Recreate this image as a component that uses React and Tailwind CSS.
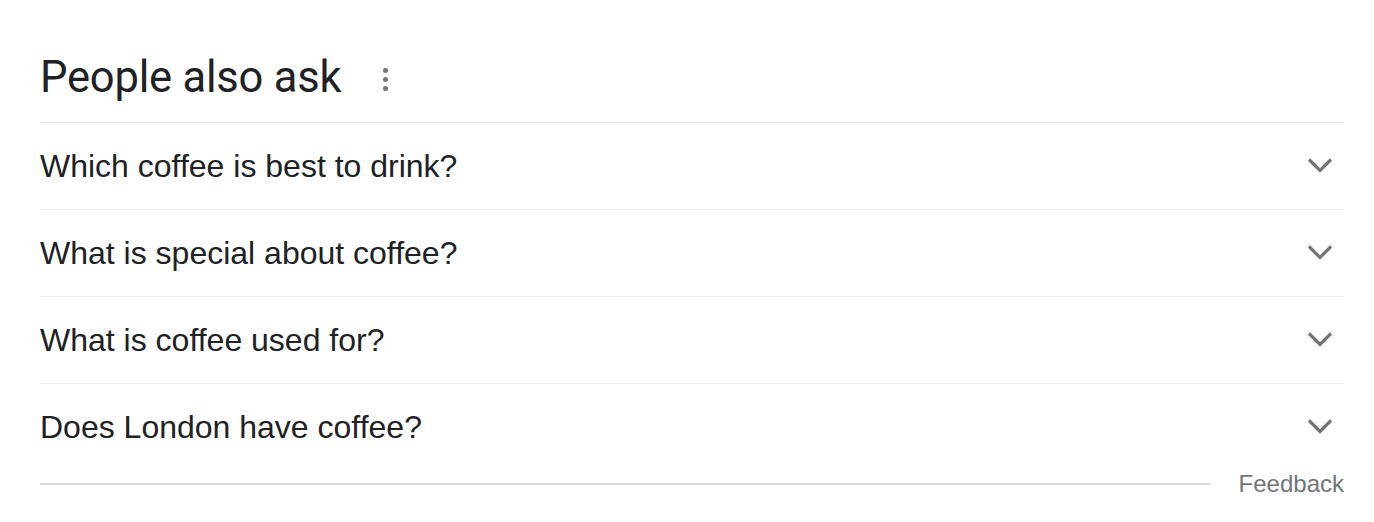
import React from "react";

const questions = [
  "Which coffee is best to drink?",
  "What is special about coffee?",
  "What is coffee used for?",
  "Does London have coffee?",
];

function Chevron() {
  return (
    <svg width="28" height="24" viewBox="0 0 28 24" className="text-[#70757a]">
      <path d="M3 5.5l11 11 11-11" fill="none" stroke="currentColor" strokeWidth="3.2" />
    </svg>
  );
}

export default function App() {
  return (
    <div className="w-[1374px] h-[522px] bg-white pl-10 pr-[30px] font-['Liberation_Sans',Arial,sans-serif] text-[#202124]">
      <div className="h-[122px] flex items-center gap-[42px] pt-[34px]">
        <h2 className="font-['Roboto',sans-serif] text-[43.5px] leading-none tracking-[-0.2px]">
          People also ask
        </h2>
        <div className="flex flex-col gap-[4px] pt-[2px]">
          <span className="w-[5px] h-[5px] rounded-full bg-[#70757a]"></span>
          <span className="w-[5px] h-[5px] rounded-full bg-[#70757a]"></span>
          <span className="w-[5px] h-[5px] rounded-full bg-[#70757a]"></span>
        </div>
      </div>
      <div>
        {questions.map((q, i) => (
          <div
            key={q}
            className={`flex items-center justify-between border-t border-[#ebebeb] ${
              i === questions.length - 1 ? "h-[86px]" : "h-[87px]"
            }`}
          >
            <span className="text-[32px]">{q}</span>
            <span className="mr-[10px]">
              <Chevron />
            </span>
          </div>
        ))}
      </div>
      <div className="flex items-center h-[30px]">
        <div className="flex-1 border-t-2 border-[#dadce0] mr-[28px]"></div>
        <span className="text-[24px] text-[#70757a]">Feedback</span>
      </div>
    </div>
  );
}
